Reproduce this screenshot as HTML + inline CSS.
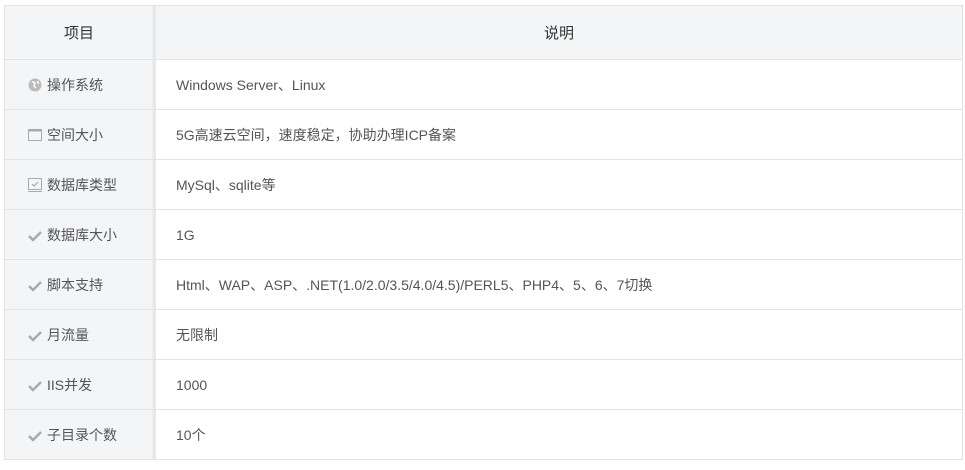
<!DOCTYPE html>
<html><head><meta charset="utf-8"><style>
body{margin:0;background:#fff;width:965px;height:470px;overflow:hidden;font-family:"Liberation Sans","Noto Sans CJK SC",sans-serif;}
.t{position:absolute;left:4px;top:5px;width:957px;border:1px solid #e2e3e5;}
.r{display:flex;height:49px;border-top:1px solid #e2e3e5;}
.r:first-child{border-top:none;height:53px;}
.l{width:151px;background:#f4f5f7;border-right:3px solid #e6e7e9;box-shadow:inset -1px 0 0 #eeeff1;display:flex;align-items:center;padding-left:23px;box-sizing:border-box;font-size:14px;color:#555;}
.v{flex:1;display:flex;align-items:center;padding-left:20px;font-size:14px;color:#555;}
.h .l{justify-content:center;padding-left:0;color:#333;font-size:15px;}
.h .v{justify-content:center;padding-left:0;background:#f4f5f7;color:#333;font-size:15px;}
.i{width:14px;height:14px;margin-right:5px;display:inline-block;}
</style></head><body>
<div class="t">
<div class="r h"><div class="l">项目</div><div class="v">说明</div></div>
<div class="r"><div class="l"><svg class="i" viewBox="0 0 14 14"><circle cx="7" cy="7" r="6.5" fill="#bbb"/><path d="M4 3.5l3 1.5-1 3 2 2M9.5 3l1 3" stroke="#fff" stroke-width="1.5" fill="none"/></svg>操作系统</div><div class="v">Windows Server、Linux</div></div>
<div class="r"><div class="l"><svg class="i" viewBox="0 0 14 14"><rect x="0.5" y="1.5" width="13" height="11" fill="none" stroke="#aaa"/><rect x="0.5" y="1.5" width="13" height="2" fill="#aaa"/></svg>空间大小</div><div class="v">5G高速云空间，速度稳定，协助办理ICP备案</div></div>
<div class="r"><div class="l"><svg class="i" viewBox="0 0 14 14"><rect x="0.5" y="0.5" width="13" height="11" fill="none" stroke="#aaa"/><path d="M4 6l2 2 4-4" stroke="#aaa" fill="none" stroke-width="1.2"/><path d="M0 13.5h14" stroke="#aaa"/></svg>数据库类型</div><div class="v">MySql、sqlite等</div></div>
<div class="r"><div class="l"><svg class="i" viewBox="0 0 14 14"><path d="M1 8l4 4 8-8" stroke="#aaa" stroke-width="2.5" fill="none"/></svg>数据库大小</div><div class="v">1G</div></div>
<div class="r"><div class="l"><svg class="i" viewBox="0 0 14 14"><path d="M1 8l4 4 8-8" stroke="#aaa" stroke-width="2.5" fill="none"/></svg>脚本支持</div><div class="v">Html、WAP、ASP、.NET(1.0/2.0/3.5/4.0/4.5)/PERL5、PHP4、5、6、7切换</div></div>
<div class="r"><div class="l"><svg class="i" viewBox="0 0 14 14"><path d="M1 8l4 4 8-8" stroke="#aaa" stroke-width="2.5" fill="none"/></svg>月流量</div><div class="v">无限制</div></div>
<div class="r"><div class="l"><svg class="i" viewBox="0 0 14 14"><path d="M1 8l4 4 8-8" stroke="#aaa" stroke-width="2.5" fill="none"/></svg>IIS并发</div><div class="v">1000</div></div>
<div class="r"><div class="l"><svg class="i" viewBox="0 0 14 14"><path d="M1 8l4 4 8-8" stroke="#aaa" stroke-width="2.5" fill="none"/></svg>子目录个数</div><div class="v">10个</div></div>
</div>
</body></html>
